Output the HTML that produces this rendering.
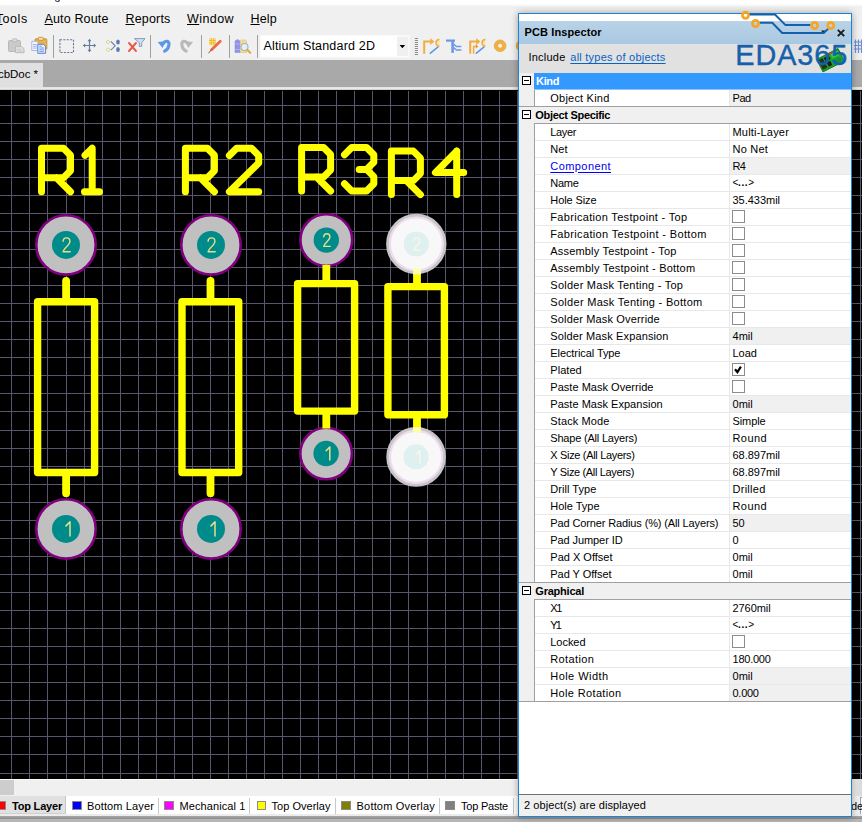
<!DOCTYPE html>
<html><head><meta charset="utf-8"><title>PCB Inspector</title>
<style>
*{box-sizing:border-box;margin:0;padding:0}
html,body{width:862px;height:822px;overflow:hidden;background:#f0f0f0;font-family:"Liberation Sans",sans-serif;}
.abs{position:absolute}
.t{position:absolute;white-space:pre;line-height:1;color:#000}
u{text-decoration:underline;text-underline-offset:1px}
</style></head><body>
<div class="abs" style="left:0;top:0;width:862px;height:822px;overflow:hidden">
<div class="abs" style="left:0;top:0;width:862px;height:6px;background:linear-gradient(#fff 0,#fff 4px,#f6f6f6 6px)"></div>
<div class="abs" style="left:55px;top:-3px;width:5px;height:5px;border:1.3px solid #333;border-top:none;border-radius:0 0 3px 3px"></div>
<div class="t" style="left:-4.3px;top:13.32px;font-size:12.5px;font-weight:400;color:#000;letter-spacing:0.562px;"><u>T</u>ools</div>
<div class="t" style="left:44.5px;top:13.32px;font-size:12.5px;font-weight:400;color:#000;letter-spacing:0.145px;"><u>A</u>uto Route</div>
<div class="t" style="left:125.5px;top:13.32px;font-size:12.5px;font-weight:400;color:#000;letter-spacing:0.174px;"><u>R</u>eports</div>
<div class="t" style="left:187px;top:13.32px;font-size:12.5px;font-weight:400;color:#000;letter-spacing:0.422px;"><u>W</u>indow</div>
<div class="t" style="left:250.5px;top:13.32px;font-size:12.5px;font-weight:400;color:#000;letter-spacing:0.145px;"><u>H</u>elp</div>
<svg class="abs" style="left:0;top:0" width="862" height="62" viewBox="0 0 862 62">
<rect x="53.0" y="35" width="1" height="23" fill="#a0a0a0"/>
<rect x="150.0" y="35" width="1" height="23" fill="#a0a0a0"/>
<rect x="201.0" y="35" width="1" height="23" fill="#a0a0a0"/>
<rect x="229.0" y="35" width="1" height="23" fill="#a0a0a0"/>
<rect x="257.0" y="35" width="1" height="23" fill="#a0a0a0"/>
<g><rect x="8.500" y="40.500" width="12" height="11" rx="1" fill="#cacaca" stroke="#b8b8b8"/><rect x="12.500" y="38.800" width="4.500" height="3" rx=".8" fill="#dcdcdc" stroke="#b4b4b4" stroke-width=".8"/><path d="M15.500 46.500h6l2.500 2.200v4h-8.500z" fill="#dedede" stroke="#bcbcbc"/><path d="M17 49.500h4M17 51.300h5.500" stroke="#c6c6c6" stroke-width=".8"/></g>
<g><rect x="35" y="38.800" width="11.800" height="10.500" rx="1" fill="#e8b24e" stroke="#c99436"/><rect x="38.300" y="37.300" width="5" height="3" rx=".8" fill="#f6e2a4" stroke="#b88a34" stroke-width=".8"/><path d="M31.800 41.300h4.700l1.600 1.600v7.600h-6.300z" fill="#f4f7fe" stroke="#9db3e2" stroke-width=".9"/><path d="M33 44.500h3.800M33 46.300h3.800M33 48.100h3.800" stroke="#86a6e6" stroke-width=".8"/><path d="M37.800 44.300h5.600l2.200 2.200v6.800h-7.800z" fill="#eaf0fd" stroke="#5b82d8" stroke-width="1"/><path d="M39.300 48h4.800M39.300 49.800h4.800M39.300 51.600h4.800" stroke="#5c86dc" stroke-width=".8"/><path d="M39.300 46.200h2.500" stroke="#5c86dc" stroke-width=".8"/></g>
<rect x="59.900" y="39.700" width="13.600" height="12.800" fill="none" stroke="#64789a" stroke-width="1.100" stroke-dasharray="2.100 1.300"/>
<g stroke="#657c9c" stroke-width="1.200" fill="#657c9c"><path d="M84 45.500h11M89.500 40v11" fill="none"/><path d="M82.800 45.500l2.400-2v4zM96.200 45.500l-2.400-2v4zM89.500 38.800l-2 2.400h4zM89.500 52.200l-2-2.400h4z" stroke="none"/></g>
<g><path d="M106 42l2-2 2 2-2 2zM106 49.800l2-2 2 2-2 2z" fill="#fbf7a8" stroke="#c9c59a" stroke-width=".7"/><path d="M110.800 41.300l4.400 4.500-4.400 4.400" fill="none" stroke="#6c7ea6" stroke-width="1.100"/><ellipse cx="118" cy="42" rx="1.800" ry="2.500" fill="#5679ba"/><ellipse cx="118" cy="49.600" rx="1.800" ry="2.500" fill="#5679ba"/></g>
<g><path d="M129 43l7 8M136 43l-7 8" stroke="#e45a48" stroke-width="1.900" stroke-linecap="round"/><path d="M134.500 38.600h10.500l-3.300 4v3.800h-2.400v-3.800z" fill="#d3dfee" stroke="#7b93bb" stroke-width=".9" stroke-linejoin="round"/></g>
<g><path d="M163.200 43.600C165.500 39.800 169.600 40.800 168.900 45.200C168.500 48 166.800 50 164.600 51.200" fill="none" stroke="#5c96e8" stroke-width="3.100" stroke-linecap="round"/><path d="M157.700 42l7.600-.700-2.700 6.600z" fill="#5c96e8"/></g>
<g transform="translate(350.800,0) scale(-1,1)"><path d="M163.200 43.600C165.500 39.800 169.600 40.800 168.900 45.200C168.500 48 166.800 50 164.600 51.200" fill="none" stroke="#b9b9b9" stroke-width="3.100" stroke-linecap="round"/><path d="M157.700 42l7.600-.700-2.700 6.600z" fill="#b9b9b9"/></g>
<g><rect x="209" y="38.200" width="7" height="7" fill="#f6e27a"/><path d="M211.300 38.200v7M213.700 38.200v7M209 40.500h7M209 42.900h7" stroke="#eeb83a" stroke-width=".9"/><path d="M220.300 41.200l-8.800 8.600" stroke="#ee6a42" stroke-width="2.700" stroke-linecap="round"/><path d="M211.600 49.700l-3.200 3.600" stroke="#7a5048" stroke-width="1"/></g>
<g><path d="M235 41l2.500-1.500 2.500 1.500v11.500h-5z" fill="#9393ea" stroke="#8080dc" stroke-width=".5"/><path d="M235 44h5M235 49.500h5" stroke="#b4b4f4" stroke-width=".9"/><path d="M240.200 41l1.500-1.500 1.500 1.200 1.500-1.200 1.800 1.500v11.500h-6.300z" fill="#f2dc92" stroke="#d2b860" stroke-width=".5"/><circle cx="244.500" cy="47" r="3.500" fill="#e6eff9" stroke="#9fb0c8" stroke-width="1.100"/><path d="M247.200 49.800l3 3" stroke="#e0aa44" stroke-width="2.200" stroke-linecap="round"/></g>
<rect x="260.5" y="35.5" width="148.500" height="21.500" fill="#fff" stroke="#fafafa"/>
<rect x="397" y="36.500" width="11.300" height="19.500" fill="#f0f0f0"/>
<path d="M399.600 45l5.600 0-2.800 3.200z" fill="#000"/>
<rect x="414.800" y="38" width="3.200" height="1" fill="#8c8c8c"/>
<rect x="414.800" y="40" width="3.200" height="1" fill="#8c8c8c"/>
<rect x="414.800" y="42" width="3.200" height="1" fill="#8c8c8c"/>
<rect x="414.800" y="44" width="3.200" height="1" fill="#8c8c8c"/>
<rect x="414.800" y="46" width="3.200" height="1" fill="#8c8c8c"/>
<rect x="414.800" y="48" width="3.200" height="1" fill="#8c8c8c"/>
<rect x="414.800" y="50" width="3.200" height="1" fill="#8c8c8c"/>
<rect x="414.800" y="52" width="3.200" height="1" fill="#8c8c8c"/>
<rect x="414.800" y="54" width="3.200" height="1" fill="#8c8c8c"/>
<g transform="translate(423,0)"><path d="M1.200 53.800v-12.200h6.500" fill="none" stroke="#f0ae3c" stroke-width="2"/><path d="M7.200 38.300l4.200 3.300-4.200 3.300z" fill="#f0ae3c"/><path d="M6.800 53.600l8.600-7" stroke="#5a93e8" stroke-width="1.400"/><path d="M16.400 39.400a3.400 3.400 0 0 0 0 6.800" fill="#f8e2a4" stroke="#eeaa3a" stroke-width="1.500"/></g>
<g stroke="#6a98e6" fill="none"><path d="M446 40.600h9" stroke-width="2.200"/><path d="M452.600 40v12.800" stroke-width="2.600"/><path d="M453.500 44l3 2.500h4.800M453.500 47.500l3 2.500h4.800" stroke-width="1.400"/></g>
<g transform="translate(469,0)"><path d="M1.200 53.800v-12.200h6.500" fill="none" stroke="#f0ae3c" stroke-width="2"/><path d="M7.200 38.300l4.200 3.300-4.200 3.300z" fill="#f0ae3c"/><path d="M4.600 53.800v-7.400h3" fill="none" stroke="#f0ae3c" stroke-width="1.500"/><path d="M6.800 44.300l2.600 2.100-2.600 2.100z" fill="#e89a30"/><path d="M6.800 53.600l8.600-7" stroke="#5a93e8" stroke-width="1.400"/><path d="M16.400 39.400a3.400 3.400 0 0 0 0 6.800" fill="#f8e2a4" stroke="#eeaa3a" stroke-width="1.500"/></g>
<circle cx="500.100" cy="45.800" r="3.900" fill="none" stroke="#f0b03c" stroke-width="3.700"/><circle cx="500.100" cy="45.800" r="5.900" fill="none" stroke="#d99a30" stroke-width=".6"/>
<circle cx="521.500" cy="45.800" r="3.900" fill="none" stroke="#f0b03c" stroke-width="3.700"/>
<g stroke="#6f8fd6" stroke-width="1.200"><path d="M855.500 39.500v13.500M858.500 39.500v13.500M861.500 39.500v13.500M854 42h8M854 45.500h8M854 49h8"/></g>
</svg>
<div class="t" style="left:263.5px;top:40.22px;font-size:12.5px;font-weight:400;color:#000;letter-spacing:0.178px;">Altium Standard 2D</div>
<div class="abs" style="left:0;top:60px;width:862px;height:27px;background:#a9a9a9"></div>
<div class="abs" style="left:0;top:63px;width:43px;height:24px;background:#e0e0e0"></div>
<div class="abs" style="left:0;top:87px;width:862px;height:3px;background:linear-gradient(#e2e2e2 0,#ececec 2px,#b8b8b8 3px)"></div>
<div class="t" style="left:-2px;top:68.87px;font-size:11.5px;font-weight:400;color:#000;letter-spacing:-0.04px;">cbDoc *</div>
<div class="abs" style="left:0;top:90px;width:862px;height:689px;background:#000;overflow:hidden">
<svg class="abs" style="left:0;top:-90px" width="862" height="822" viewBox="0 0 862 822">
<g fill="#58566c" shape-rendering="crispEdges">
<rect x="11" y="91" width="1" height="688"/>
<rect x="29" y="91" width="1" height="688"/>
<rect x="47" y="91" width="1" height="688"/>
<rect x="66" y="91" width="1" height="688"/>
<rect x="84" y="91" width="1" height="688"/>
<rect x="102" y="91" width="1" height="688"/>
<rect x="120" y="91" width="1" height="688"/>
<rect x="138" y="91" width="1" height="688"/>
<rect x="156" y="91" width="1" height="688"/>
<rect x="174" y="91" width="1" height="688"/>
<rect x="192" y="91" width="1" height="688"/>
<rect x="210" y="91" width="1" height="688"/>
<rect x="228" y="91" width="1" height="688"/>
<rect x="246" y="91" width="1" height="688"/>
<rect x="264" y="91" width="1" height="688"/>
<rect x="282" y="91" width="1" height="688"/>
<rect x="300" y="91" width="1" height="688"/>
<rect x="318" y="91" width="1" height="688"/>
<rect x="336" y="91" width="1" height="688"/>
<rect x="354" y="91" width="1" height="688"/>
<rect x="372" y="91" width="1" height="688"/>
<rect x="390" y="91" width="1" height="688"/>
<rect x="408" y="91" width="1" height="688"/>
<rect x="427" y="91" width="1" height="688"/>
<rect x="445" y="91" width="1" height="688"/>
<rect x="463" y="91" width="1" height="688"/>
<rect x="481" y="91" width="1" height="688"/>
<rect x="499" y="91" width="1" height="688"/>
<rect x="517" y="91" width="1" height="688"/>
<rect x="535" y="91" width="1" height="688"/>
<rect x="553" y="91" width="1" height="688"/>
<rect x="571" y="91" width="1" height="688"/>
<rect x="589" y="91" width="1" height="688"/>
<rect x="607" y="91" width="1" height="688"/>
<rect x="625" y="91" width="1" height="688"/>
<rect x="643" y="91" width="1" height="688"/>
<rect x="661" y="91" width="1" height="688"/>
<rect x="679" y="91" width="1" height="688"/>
<rect x="697" y="91" width="1" height="688"/>
<rect x="715" y="91" width="1" height="688"/>
<rect x="733" y="91" width="1" height="688"/>
<rect x="751" y="91" width="1" height="688"/>
<rect x="769" y="91" width="1" height="688"/>
<rect x="788" y="91" width="1" height="688"/>
<rect x="806" y="91" width="1" height="688"/>
<rect x="824" y="91" width="1" height="688"/>
<rect x="842" y="91" width="1" height="688"/>
<rect x="860" y="91" width="1" height="688"/>
<rect x="0" y="105" width="862" height="1"/>
<rect x="0" y="123" width="862" height="1"/>
<rect x="0" y="141" width="862" height="1"/>
<rect x="0" y="159" width="862" height="1"/>
<rect x="0" y="177" width="862" height="1"/>
<rect x="0" y="195" width="862" height="1"/>
<rect x="0" y="213" width="862" height="1"/>
<rect x="0" y="231" width="862" height="1"/>
<rect x="0" y="249" width="862" height="1"/>
<rect x="0" y="267" width="862" height="1"/>
<rect x="0" y="285" width="862" height="1"/>
<rect x="0" y="303" width="862" height="1"/>
<rect x="0" y="321" width="862" height="1"/>
<rect x="0" y="339" width="862" height="1"/>
<rect x="0" y="357" width="862" height="1"/>
<rect x="0" y="375" width="862" height="1"/>
<rect x="0" y="393" width="862" height="1"/>
<rect x="0" y="411" width="862" height="1"/>
<rect x="0" y="430" width="862" height="1"/>
<rect x="0" y="448" width="862" height="1"/>
<rect x="0" y="466" width="862" height="1"/>
<rect x="0" y="484" width="862" height="1"/>
<rect x="0" y="502" width="862" height="1"/>
<rect x="0" y="520" width="862" height="1"/>
<rect x="0" y="538" width="862" height="1"/>
<rect x="0" y="556" width="862" height="1"/>
<rect x="0" y="574" width="862" height="1"/>
<rect x="0" y="592" width="862" height="1"/>
<rect x="0" y="610" width="862" height="1"/>
<rect x="0" y="628" width="862" height="1"/>
<rect x="0" y="646" width="862" height="1"/>
<rect x="0" y="664" width="862" height="1"/>
<rect x="0" y="682" width="862" height="1"/>
<rect x="0" y="700" width="862" height="1"/>
<rect x="0" y="718" width="862" height="1"/>
<rect x="0" y="736" width="862" height="1"/>
<rect x="0" y="754" width="862" height="1"/>
<rect x="0" y="773" width="862" height="1"/>
</g>
<g fill="none" stroke="#ffff00" stroke-width="7" stroke-linecap="round" stroke-linejoin="round">
<path d="M41.5 191.8V148.3M41.5 148.3H63.5L70.5 155.3V170.8L63.5 177.8H41.5M56.5 177.8L70.5 191.8"/>
<path d="M85.0 155.3L92.2 148.3V191.8M84.5 191.8H99.5"/>
<path d="M185.4 191.8V148.3M185.4 148.3H207.4L214.4 155.3V170.8L207.4 177.8H185.4M200.4 177.8L214.4 191.8"/>
<path d="M229.4 155.5L236.6 148.3H251.5L258.7 155.5V163.0L229.4 191.8H258.7"/>
<path d="M301.6 191.0V147.5M301.6 147.5H323.6L330.6 154.5V170.0L323.6 177.0H301.6M316.6 177.0L330.6 191.0"/>
<path d="M344.5 154.7L351.7 147.5H366.6L373.8 154.7V162.2L366.6 169.4H359.2M366.6 169.4L373.8 176.6V183.8L366.6 191.0H351.7L344.5 183.8"/>
<path d="M391.4 194.6V151.1M391.4 151.1H413.4L420.4 158.1V173.6L413.4 180.6H391.4M406.4 180.6L420.4 194.6"/>
<path d="M456.7 194.6V151.1M456.7 151.1L435.4 172.6H463.7"/>
</g>
<circle cx="66.0" cy="244.9" r="29.7" fill="#c0c0c0" stroke="#800080" stroke-width="2.600"/><circle cx="66.0" cy="244.9" r="14.0" fill="#008b8b"/><path d="M63.1 241.2C63.4 236.8 69.9 236.8 69.9 241.4C69.9 245.0 63.6 248.3 63.1 251.8H70.2" fill="none" stroke="#e6e08a" stroke-width="1.4" stroke-linecap="round" stroke-linejoin="round"/>
<circle cx="66.0" cy="528.9" r="29.7" fill="#c0c0c0" stroke="#800080" stroke-width="2.600"/><circle cx="66.0" cy="528.9" r="14.0" fill="#008b8b"/><path d="M66.0 525.9L70.0 521.9V535.9" fill="none" stroke="#e6e08a" stroke-width="1.5" stroke-linecap="round" stroke-linejoin="round"/>
<rect x="37.6" y="301.7" width="57.0" height="170.8" fill="none" stroke="#ffff00" stroke-width="7.4" stroke-linejoin="round"/><path d="M66.1 300.9V280.8M66.1 473.3V493.2" fill="none" stroke="#ffff00" stroke-width="7.800" stroke-linecap="round"/>
<circle cx="211.0" cy="244.9" r="29.7" fill="#c0c0c0" stroke="#800080" stroke-width="2.600"/><circle cx="211.0" cy="244.9" r="14.0" fill="#008b8b"/><path d="M208.1 241.2C208.4 236.8 214.9 236.8 214.9 241.4C214.9 245.0 208.6 248.3 208.1 251.8H215.2" fill="none" stroke="#e6e08a" stroke-width="1.4" stroke-linecap="round" stroke-linejoin="round"/>
<circle cx="211.0" cy="528.9" r="29.7" fill="#c0c0c0" stroke="#800080" stroke-width="2.600"/><circle cx="211.0" cy="528.9" r="14.0" fill="#008b8b"/><path d="M211.0 525.9L215.0 521.9V535.9" fill="none" stroke="#e6e08a" stroke-width="1.5" stroke-linecap="round" stroke-linejoin="round"/>
<rect x="182.0" y="301.7" width="56.7" height="170.8" fill="none" stroke="#ffff00" stroke-width="7.4" stroke-linejoin="round"/><path d="M210.5 300.9V280.8M210.5 473.3V493.2" fill="none" stroke="#ffff00" stroke-width="7.800" stroke-linecap="round"/>
<circle cx="326.3" cy="240.1" r="25.9" fill="#c0c0c0" stroke="#800080" stroke-width="2.600"/><circle cx="326.3" cy="240.1" r="12.7" fill="#008b8b"/><path d="M323.7 236.7C324.0 232.8 329.9 232.8 329.9 236.9C329.9 240.2 324.2 243.2 323.7 246.4H330.2" fill="none" stroke="#e6e08a" stroke-width="1.4" stroke-linecap="round" stroke-linejoin="round"/>
<circle cx="326.1" cy="453.5" r="25.8" fill="#c0c0c0" stroke="#800080" stroke-width="2.600"/><circle cx="326.1" cy="453.5" r="12.7" fill="#008b8b"/><path d="M326.1 450.8L329.8 447.1V459.9" fill="none" stroke="#e6e08a" stroke-width="1.5" stroke-linecap="round" stroke-linejoin="round"/>
<rect x="297.6" y="283.6" width="57.0" height="127.5" fill="none" stroke="#ffff00" stroke-width="7.4" stroke-linejoin="round"/><path d="M326.3 282.8V265.0M326.3 411.9V428.5" fill="none" stroke="#ffff00" stroke-width="7.800" stroke-linecap="butt"/>
<rect x="387.9" y="286.6" width="56.5" height="128.1" fill="none" stroke="#ffff00" stroke-width="7.4" stroke-linejoin="round"/><path d="M417.0 285.8V272.0M417.0 415.5V428.5" fill="none" stroke="#ffff00" stroke-width="7.800" stroke-linecap="round"/>
<circle cx="416.3" cy="244.0" r="28.7" fill="#f8f8f8" stroke="#c6c6c6" stroke-width="3"/><circle cx="416.3" cy="244.0" r="26.4" fill="none" stroke="#f0daf0" stroke-width="2"/><circle cx="416.3" cy="244.0" r="12.6" fill="#dff0f0"/><path d="M413.7 240.7C414.0 236.7 419.9 236.7 419.9 240.8C419.9 244.1 414.2 247.1 413.7 250.2H420.1" fill="none" stroke="#f7f7e6" stroke-width="1.4" stroke-linecap="round" stroke-linejoin="round"/>
<circle cx="416.1" cy="456.9" r="28.3" fill="#f8f8f8" stroke="#c6c6c6" stroke-width="3"/><circle cx="416.1" cy="456.9" r="26.0" fill="none" stroke="#f0daf0" stroke-width="2"/><circle cx="416.1" cy="456.9" r="12.6" fill="#dff0f0"/><path d="M416.2 454.2L419.8 450.6V463.2" fill="none" stroke="#f7f7e6" stroke-width="1.5" stroke-linecap="round" stroke-linejoin="round"/>
<rect x="413.100" y="268.500" width="7.800" height="6" fill="#ffffa8"/>
<rect x="413.100" y="427" width="7.800" height="5.500" fill="#ffffa8"/>
</svg></div>
<div class="abs" style="left:0;top:779px;width:862px;height:17px;background:#f0f0f0;border-top:1px solid #fbfbfb"></div>
<div class="abs" style="left:0;top:780px;width:14px;height:15px;background:#cdcdcd"></div>
<div class="abs" style="left:852px;top:779px;width:10px;height:17px;background:linear-gradient(90deg,#f0f0f0,#d8d8d8)"></div>
<div class="abs" style="left:0;top:796px;width:862px;height:18px;background:#fff"></div>
<div class="abs" style="left:0;top:796px;width:65.500px;height:18px;background:#e1e1e1;border-right:1px solid #c4c4c4;border-bottom:1px solid #d0d0d0"></div>
<div class="abs" style="left:157.5px;top:798px;width:1px;height:16px;background:#c8c8c8"></div>
<div class="abs" style="left:249px;top:798px;width:1px;height:16px;background:#c8c8c8"></div>
<div class="abs" style="left:335px;top:798px;width:1px;height:16px;background:#c8c8c8"></div>
<div class="abs" style="left:438.8px;top:798px;width:1px;height:16px;background:#c8c8c8"></div>
<div class="abs" style="left:512.5px;top:798px;width:1px;height:16px;background:#c8c8c8"></div>
<div class="abs" style="left:-4px;top:800.700px;width:9.5px;height:9px;background:#ff0000;border:1px solid #8a8a8a"></div>
<div class="abs" style="left:72.2px;top:800.700px;width:9.6px;height:9px;background:#0000ff;border:1px solid #8a8a8a"></div>
<div class="abs" style="left:164.3px;top:800.700px;width:9.3px;height:9px;background:#ff00ff;border:1px solid #8a8a8a"></div>
<div class="abs" style="left:256.5px;top:800.700px;width:9.3px;height:9px;background:#ffff00;border:1px solid #8a8a8a"></div>
<div class="abs" style="left:341px;top:800.700px;width:9.6px;height:9px;background:#808000;border:1px solid #8a8a8a"></div>
<div class="abs" style="left:445px;top:800.700px;width:9.6px;height:9px;background:#808080;border:1px solid #8a8a8a"></div>
<div class="t" style="left:12px;top:800.69px;font-size:11px;font-weight:700;color:#000;letter-spacing:-0.196px;">Top Layer</div>
<div class="t" style="left:87px;top:800.69px;font-size:11px;font-weight:400;color:#000;letter-spacing:0.132px;">Bottom Layer</div>
<div class="t" style="left:179.6px;top:800.69px;font-size:11px;font-weight:400;color:#000;letter-spacing:0.081px;">Mechanical 1</div>
<div class="t" style="left:271.5px;top:800.69px;font-size:11px;font-weight:400;color:#000;letter-spacing:0.027px;">Top Overlay</div>
<div class="t" style="left:356.6px;top:800.69px;font-size:11px;font-weight:400;color:#000;letter-spacing:0.178px;">Bottom Overlay</div>
<div class="t" style="left:461px;top:800.69px;font-size:11px;font-weight:400;color:#000;letter-spacing:-0.214px;">Top Paste</div>
<div class="abs" style="left:852px;top:796px;width:10px;height:18px;background:#f0f0f0"></div>
<div class="abs" style="left:860px;top:797px;width:2px;height:17px;border-left:1px solid #a0a0a0;border-top:1px solid #a0a0a0;background:#fff"></div>
<div class="t" style="left:851px;top:800.69px;font-size:11px;font-weight:400;color:#000;">de</div>
<div class="abs" style="left:0;top:814px;width:862px;height:2px;background:#ececec"></div>
<div class="abs" style="left:0;top:816px;width:862px;height:3px;background:linear-gradient(#a8a8a8,#8c8c8c)"></div>
<div class="abs" style="left:0;top:819px;width:862px;height:3px;background:#b6b6b6"></div>
<div id="panel" class="abs" style="left:518px;top:13px;width:334px;height:804px;background:#fff;border:1px solid #1a84d8;box-shadow:0 0 7px rgba(0,0,0,.35)">
<div class="abs" style="left:0px;top:7px;width:332px;height:23px;background:linear-gradient(#b9d3e8,#a9c8e1)"></div>
<div class="abs" style="left:0px;top:30px;width:332px;height:29px;background:#e1e1e1"></div>
<div class="t" style="left:5.6px;top:12.69px;font-size:11px;font-weight:700;color:#000;letter-spacing:0.093px;">PCB Inspector</div>
<div class="t" style="left:9.5px;top:38.49px;font-size:11px;font-weight:400;color:#000;letter-spacing:0.217px;">Include</div>
<div class="t" style="left:51.3px;top:38.49px;font-size:11px;font-weight:400;color:#0a62c4;letter-spacing:0.24px;text-decoration:underline;text-underline-offset:1.5px">all types of objects</div>
<svg class="abs" style="left:301px;top:14px" width="30" height="12" viewBox="0 0 30 12"><path d="M1 2.500h4.600l-2.300 2.800z" fill="#222"/><path d="M17.800 1.800l6.400 6.400M24.200 1.800l-6.400 6.400" stroke="#1a1a1a" stroke-width="1.900"/></svg>
<div class="abs" style="left:0px;top:59px;width:15px;height:629px;background:#f0f0f0"></div>
<div class="abs" style="left:15px;top:59px;width:317px;height:16px;background:#3399ff"></div>
<div class="abs" style="left:15px;top:75px;width:317px;height:1px;background:#8fc4f6"></div>
<div class="abs" style="left:3px;top:62px;width:9px;height:9px;background:#fff;border:1px solid #000"></div>
<div class="abs" style="left:5px;top:66px;width:5px;height:1px;background:#000"></div>
<div class="t" style="left:17px;top:61.69px;font-size:11px;font-weight:700;color:#fff;letter-spacing:-0.313px;">Kind</div>
<div class="abs" style="left:15px;top:76px;width:1px;height:17px;background:#a0a0a0"></div>
<div class="abs" style="left:211px;top:76px;width:121px;height:16px;background:#f0f0f0"></div>
<div class="abs" style="left:210px;top:76px;width:1px;height:16px;background:#e8e8e8"></div>
<div class="abs" style="left:0px;top:92px;width:332px;height:1px;background:#a0a0a0"></div>
<div class="t" style="left:31.3px;top:78.69px;font-size:11px;font-weight:400;color:#000;letter-spacing:0.211px;">Object Kind</div>
<div class="t" style="left:213.5px;top:78.69px;font-size:11px;font-weight:400;color:#000;letter-spacing:-0.459px;">Pad</div>
<div class="abs" style="left:0px;top:93px;width:332px;height:16px;background:#f0f0f0"></div>
<div class="abs" style="left:15px;top:109px;width:317px;height:1px;background:#a0a0a0"></div>
<div class="abs" style="left:3px;top:96px;width:9px;height:9px;background:#fff;border:1px solid #000"></div>
<div class="abs" style="left:5px;top:100px;width:5px;height:1px;background:#000"></div>
<div class="t" style="left:16.3px;top:95.69px;font-size:11px;font-weight:700;color:#000;letter-spacing:-0.306px;">Object Specific</div>
<div class="abs" style="left:15px;top:110px;width:1px;height:17px;background:#a0a0a0"></div>
<div class="abs" style="left:210px;top:110px;width:1px;height:16px;background:#e8e8e8"></div>
<div class="abs" style="left:16px;top:126px;width:316px;height:1px;background:#e8e8e8"></div>
<div class="t" style="left:31.3px;top:112.69px;font-size:11px;font-weight:400;color:#000;letter-spacing:-0.346px;">Layer</div>
<div class="t" style="left:213.5px;top:112.69px;font-size:11px;font-weight:400;color:#000;letter-spacing:0.19px;">Multi-Layer</div>
<div class="abs" style="left:15px;top:127px;width:1px;height:17px;background:#a0a0a0"></div>
<div class="abs" style="left:210px;top:127px;width:1px;height:16px;background:#e8e8e8"></div>
<div class="abs" style="left:16px;top:143px;width:316px;height:1px;background:#e8e8e8"></div>
<div class="t" style="left:31.3px;top:129.69px;font-size:11px;font-weight:400;color:#000;letter-spacing:0.092px;">Net</div>
<div class="t" style="left:213.5px;top:129.69px;font-size:11px;font-weight:400;color:#000;letter-spacing:0.225px;">No Net</div>
<div class="abs" style="left:15px;top:144px;width:1px;height:17px;background:#a0a0a0"></div>
<div class="abs" style="left:211px;top:144px;width:121px;height:16px;background:#f0f0f0"></div>
<div class="abs" style="left:210px;top:144px;width:1px;height:16px;background:#e8e8e8"></div>
<div class="abs" style="left:16px;top:160px;width:316px;height:1px;background:#e8e8e8"></div>
<div class="t" style="left:31.3px;top:146.69px;font-size:11px;font-weight:400;color:#0000ee;letter-spacing:0.425px;text-decoration:underline;text-underline-offset:1.5px">Component</div>
<div class="t" style="left:213.5px;top:146.69px;font-size:11px;font-weight:400;color:#000;letter-spacing:-0.731px;">R4</div>
<div class="abs" style="left:15px;top:161px;width:1px;height:17px;background:#a0a0a0"></div>
<div class="abs" style="left:210px;top:161px;width:1px;height:16px;background:#e8e8e8"></div>
<div class="abs" style="left:16px;top:177px;width:316px;height:1px;background:#e8e8e8"></div>
<div class="t" style="left:31.3px;top:163.69px;font-size:11px;font-weight:400;color:#000;letter-spacing:-0.261px;">Name</div>
<div class="t" style="left:213.5px;top:163.69px;font-size:11px;font-weight:400;color:#000;font-size:10px;letter-spacing:-.3px">&lt;<b style="letter-spacing:.6px">...</b>&gt;</div>
<div class="abs" style="left:15px;top:178px;width:1px;height:17px;background:#a0a0a0"></div>
<div class="abs" style="left:210px;top:178px;width:1px;height:16px;background:#e8e8e8"></div>
<div class="abs" style="left:16px;top:194px;width:316px;height:1px;background:#e8e8e8"></div>
<div class="t" style="left:31.3px;top:180.69px;font-size:11px;font-weight:400;color:#000;letter-spacing:-0.109px;">Hole Size</div>
<div class="t" style="left:213.5px;top:180.69px;font-size:11px;font-weight:400;color:#000;letter-spacing:-0.023px;">35.433mil</div>
<div class="abs" style="left:15px;top:195px;width:1px;height:17px;background:#a0a0a0"></div>
<div class="abs" style="left:210px;top:195px;width:1px;height:16px;background:#e8e8e8"></div>
<div class="abs" style="left:16px;top:211px;width:316px;height:1px;background:#e8e8e8"></div>
<div class="t" style="left:31.3px;top:197.69px;font-size:11px;font-weight:400;color:#000;letter-spacing:0.314px;">Fabrication Testpoint - Top</div>
<div class="abs" style="left:213.20000000000005px;top:196.2px;width:12.6px;height:12.5px;background:#fff;border:1px solid #8c8c8c"></div>
<div class="abs" style="left:15px;top:212px;width:1px;height:17px;background:#a0a0a0"></div>
<div class="abs" style="left:210px;top:212px;width:1px;height:16px;background:#e8e8e8"></div>
<div class="abs" style="left:16px;top:228px;width:316px;height:1px;background:#e8e8e8"></div>
<div class="t" style="left:31.3px;top:214.69px;font-size:11px;font-weight:400;color:#000;letter-spacing:0.349px;">Fabrication Testpoint - Bottom</div>
<div class="abs" style="left:213.20000000000005px;top:213.2px;width:12.6px;height:12.5px;background:#fff;border:1px solid #8c8c8c"></div>
<div class="abs" style="left:15px;top:229px;width:1px;height:17px;background:#a0a0a0"></div>
<div class="abs" style="left:210px;top:229px;width:1px;height:16px;background:#e8e8e8"></div>
<div class="abs" style="left:16px;top:245px;width:316px;height:1px;background:#e8e8e8"></div>
<div class="t" style="left:31.3px;top:231.69px;font-size:11px;font-weight:400;color:#000;letter-spacing:0.18px;">Assembly Testpoint - Top</div>
<div class="abs" style="left:213.20000000000005px;top:230.2px;width:12.6px;height:12.5px;background:#fff;border:1px solid #8c8c8c"></div>
<div class="abs" style="left:15px;top:246px;width:1px;height:17px;background:#a0a0a0"></div>
<div class="abs" style="left:210px;top:246px;width:1px;height:16px;background:#e8e8e8"></div>
<div class="abs" style="left:16px;top:262px;width:316px;height:1px;background:#e8e8e8"></div>
<div class="t" style="left:31.3px;top:248.69px;font-size:11px;font-weight:400;color:#000;letter-spacing:0.215px;">Assembly Testpoint - Bottom</div>
<div class="abs" style="left:213.20000000000005px;top:247.2px;width:12.6px;height:12.5px;background:#fff;border:1px solid #8c8c8c"></div>
<div class="abs" style="left:15px;top:263px;width:1px;height:17px;background:#a0a0a0"></div>
<div class="abs" style="left:210px;top:263px;width:1px;height:16px;background:#e8e8e8"></div>
<div class="abs" style="left:16px;top:279px;width:316px;height:1px;background:#e8e8e8"></div>
<div class="t" style="left:31.3px;top:265.69px;font-size:11px;font-weight:400;color:#000;letter-spacing:0.245px;">Solder Mask Tenting - Top</div>
<div class="abs" style="left:213.20000000000005px;top:264.2px;width:12.6px;height:12.5px;background:#fff;border:1px solid #8c8c8c"></div>
<div class="abs" style="left:15px;top:280px;width:1px;height:17px;background:#a0a0a0"></div>
<div class="abs" style="left:210px;top:280px;width:1px;height:16px;background:#e8e8e8"></div>
<div class="abs" style="left:16px;top:296px;width:316px;height:1px;background:#e8e8e8"></div>
<div class="t" style="left:31.3px;top:282.69px;font-size:11px;font-weight:400;color:#000;letter-spacing:0.29px;">Solder Mask Tenting - Bottom</div>
<div class="abs" style="left:213.20000000000005px;top:281.2px;width:12.6px;height:12.5px;background:#fff;border:1px solid #8c8c8c"></div>
<div class="abs" style="left:15px;top:297px;width:1px;height:17px;background:#a0a0a0"></div>
<div class="abs" style="left:210px;top:297px;width:1px;height:16px;background:#e8e8e8"></div>
<div class="abs" style="left:16px;top:313px;width:316px;height:1px;background:#e8e8e8"></div>
<div class="t" style="left:31.3px;top:299.69px;font-size:11px;font-weight:400;color:#000;letter-spacing:0.156px;">Solder Mask Override</div>
<div class="abs" style="left:213.20000000000005px;top:298.2px;width:12.6px;height:12.5px;background:#fff;border:1px solid #8c8c8c"></div>
<div class="abs" style="left:15px;top:314px;width:1px;height:17px;background:#a0a0a0"></div>
<div class="abs" style="left:211px;top:314px;width:121px;height:16px;background:#f0f0f0"></div>
<div class="abs" style="left:210px;top:314px;width:1px;height:16px;background:#e8e8e8"></div>
<div class="abs" style="left:16px;top:330px;width:316px;height:1px;background:#e8e8e8"></div>
<div class="t" style="left:31.3px;top:316.69px;font-size:11px;font-weight:400;color:#000;letter-spacing:0.13px;">Solder Mask Expansion</div>
<div class="t" style="left:213.5px;top:316.69px;font-size:11px;font-weight:400;color:#000;letter-spacing:0.032px;">4mil</div>
<div class="abs" style="left:15px;top:331px;width:1px;height:17px;background:#a0a0a0"></div>
<div class="abs" style="left:210px;top:331px;width:1px;height:16px;background:#e8e8e8"></div>
<div class="abs" style="left:16px;top:347px;width:316px;height:1px;background:#e8e8e8"></div>
<div class="t" style="left:31.3px;top:333.69px;font-size:11px;font-weight:400;color:#000;letter-spacing:-0.082px;">Electrical Type</div>
<div class="t" style="left:213.5px;top:333.69px;font-size:11px;font-weight:400;color:#000;letter-spacing:0.004px;">Load</div>
<div class="abs" style="left:15px;top:348px;width:1px;height:17px;background:#a0a0a0"></div>
<div class="abs" style="left:210px;top:348px;width:1px;height:16px;background:#e8e8e8"></div>
<div class="abs" style="left:16px;top:364px;width:316px;height:1px;background:#e8e8e8"></div>
<div class="t" style="left:31.3px;top:350.69px;font-size:11px;font-weight:400;color:#000;letter-spacing:0.033px;">Plated</div>
<div class="abs" style="left:213.20000000000005px;top:349.2px;width:12.6px;height:12.5px;background:#fff;border:1px solid #8c8c8c"></div>
<svg class="abs" style="left:213.60000000000002px;top:349.6px" width="12" height="12" viewBox="0 0 12 12"><path d="M2 5.200l2.400 3 3.500-5.600" fill="none" stroke="#000" stroke-width="2.200"/></svg>
<div class="abs" style="left:15px;top:365px;width:1px;height:17px;background:#a0a0a0"></div>
<div class="abs" style="left:210px;top:365px;width:1px;height:16px;background:#e8e8e8"></div>
<div class="abs" style="left:16px;top:381px;width:316px;height:1px;background:#e8e8e8"></div>
<div class="t" style="left:31.3px;top:367.69px;font-size:11px;font-weight:400;color:#000;letter-spacing:0.026px;">Paste Mask Override</div>
<div class="abs" style="left:213.20000000000005px;top:366.2px;width:12.6px;height:12.5px;background:#fff;border:1px solid #8c8c8c"></div>
<div class="abs" style="left:15px;top:382px;width:1px;height:17px;background:#a0a0a0"></div>
<div class="abs" style="left:211px;top:382px;width:121px;height:16px;background:#f0f0f0"></div>
<div class="abs" style="left:210px;top:382px;width:1px;height:16px;background:#e8e8e8"></div>
<div class="abs" style="left:16px;top:398px;width:316px;height:1px;background:#e8e8e8"></div>
<div class="t" style="left:31.3px;top:384.69px;font-size:11px;font-weight:400;color:#000;letter-spacing:0.025px;">Paste Mask Expansion</div>
<div class="t" style="left:213.5px;top:384.69px;font-size:11px;font-weight:400;color:#000;letter-spacing:0.032px;">0mil</div>
<div class="abs" style="left:15px;top:399px;width:1px;height:17px;background:#a0a0a0"></div>
<div class="abs" style="left:210px;top:399px;width:1px;height:16px;background:#e8e8e8"></div>
<div class="abs" style="left:16px;top:415px;width:316px;height:1px;background:#e8e8e8"></div>
<div class="t" style="left:31.3px;top:401.69px;font-size:11px;font-weight:400;color:#000;letter-spacing:0.111px;">Stack Mode</div>
<div class="t" style="left:213.5px;top:401.69px;font-size:11px;font-weight:400;color:#000;letter-spacing:-0.087px;">Simple</div>
<div class="abs" style="left:15px;top:416px;width:1px;height:17px;background:#a0a0a0"></div>
<div class="abs" style="left:210px;top:416px;width:1px;height:16px;background:#e8e8e8"></div>
<div class="abs" style="left:16px;top:432px;width:316px;height:1px;background:#e8e8e8"></div>
<div class="t" style="left:31.3px;top:418.69px;font-size:11px;font-weight:400;color:#000;letter-spacing:-0.2px;">Shape (All Layers)</div>
<div class="t" style="left:213.5px;top:418.69px;font-size:11px;font-weight:400;color:#000;letter-spacing:0.416px;">Round</div>
<div class="abs" style="left:15px;top:433px;width:1px;height:17px;background:#a0a0a0"></div>
<div class="abs" style="left:210px;top:433px;width:1px;height:16px;background:#e8e8e8"></div>
<div class="abs" style="left:16px;top:449px;width:316px;height:1px;background:#e8e8e8"></div>
<div class="t" style="left:31.3px;top:435.69px;font-size:11px;font-weight:400;color:#000;letter-spacing:-0.325px;">X Size (All Layers)</div>
<div class="t" style="left:213.5px;top:435.69px;font-size:11px;font-weight:400;color:#000;letter-spacing:-0.023px;">68.897mil</div>
<div class="abs" style="left:15px;top:450px;width:1px;height:17px;background:#a0a0a0"></div>
<div class="abs" style="left:210px;top:450px;width:1px;height:16px;background:#e8e8e8"></div>
<div class="abs" style="left:16px;top:466px;width:316px;height:1px;background:#e8e8e8"></div>
<div class="t" style="left:31.3px;top:452.69px;font-size:11px;font-weight:400;color:#000;letter-spacing:-0.346px;">Y Size (All Layers)</div>
<div class="t" style="left:213.5px;top:452.69px;font-size:11px;font-weight:400;color:#000;letter-spacing:-0.023px;">68.897mil</div>
<div class="abs" style="left:15px;top:467px;width:1px;height:17px;background:#a0a0a0"></div>
<div class="abs" style="left:210px;top:467px;width:1px;height:16px;background:#e8e8e8"></div>
<div class="abs" style="left:16px;top:483px;width:316px;height:1px;background:#e8e8e8"></div>
<div class="t" style="left:31.3px;top:469.69px;font-size:11px;font-weight:400;color:#000;letter-spacing:0.034px;">Drill Type</div>
<div class="t" style="left:213.5px;top:469.69px;font-size:11px;font-weight:400;color:#000;letter-spacing:0.273px;">Drilled</div>
<div class="abs" style="left:15px;top:484px;width:1px;height:17px;background:#a0a0a0"></div>
<div class="abs" style="left:210px;top:484px;width:1px;height:16px;background:#e8e8e8"></div>
<div class="abs" style="left:16px;top:500px;width:316px;height:1px;background:#e8e8e8"></div>
<div class="t" style="left:31.3px;top:486.69px;font-size:11px;font-weight:400;color:#000;letter-spacing:-0.014px;">Hole Type</div>
<div class="t" style="left:213.5px;top:486.69px;font-size:11px;font-weight:400;color:#000;letter-spacing:0.416px;">Round</div>
<div class="abs" style="left:15px;top:501px;width:1px;height:17px;background:#a0a0a0"></div>
<div class="abs" style="left:211px;top:501px;width:121px;height:16px;background:#f0f0f0"></div>
<div class="abs" style="left:210px;top:501px;width:1px;height:16px;background:#e8e8e8"></div>
<div class="abs" style="left:16px;top:517px;width:316px;height:1px;background:#e8e8e8"></div>
<div class="t" style="left:31.3px;top:503.69px;font-size:11px;font-weight:400;color:#000;letter-spacing:-0.126px;">Pad Corner Radius (%) (All Layers)</div>
<div class="t" style="left:213.5px;top:503.69px;font-size:11px;font-weight:400;color:#000;letter-spacing:-0.175px;">50</div>
<div class="abs" style="left:15px;top:518px;width:1px;height:17px;background:#a0a0a0"></div>
<div class="abs" style="left:210px;top:518px;width:1px;height:16px;background:#e8e8e8"></div>
<div class="abs" style="left:16px;top:534px;width:316px;height:1px;background:#e8e8e8"></div>
<div class="t" style="left:31.3px;top:520.69px;font-size:11px;font-weight:400;color:#000;letter-spacing:-0.09px;">Pad Jumper ID</div>
<div class="t" style="left:213.5px;top:520.69px;font-size:11px;font-weight:400;color:#000;letter-spacing:-0.525px;">0</div>
<div class="abs" style="left:15px;top:535px;width:1px;height:17px;background:#a0a0a0"></div>
<div class="abs" style="left:210px;top:535px;width:1px;height:16px;background:#e8e8e8"></div>
<div class="abs" style="left:16px;top:551px;width:316px;height:1px;background:#e8e8e8"></div>
<div class="t" style="left:31.3px;top:537.69px;font-size:11px;font-weight:400;color:#000;letter-spacing:0.002px;">Pad X Offset</div>
<div class="t" style="left:213.5px;top:537.69px;font-size:11px;font-weight:400;color:#000;letter-spacing:0.032px;">0mil</div>
<div class="abs" style="left:15px;top:552px;width:1px;height:17px;background:#a0a0a0"></div>
<div class="abs" style="left:210px;top:552px;width:1px;height:16px;background:#e8e8e8"></div>
<div class="abs" style="left:0px;top:568px;width:332px;height:1px;background:#a0a0a0"></div>
<div class="t" style="left:31.3px;top:554.69px;font-size:11px;font-weight:400;color:#000;letter-spacing:-0.04px;">Pad Y Offset</div>
<div class="t" style="left:213.5px;top:554.69px;font-size:11px;font-weight:400;color:#000;letter-spacing:0.032px;">0mil</div>
<div class="abs" style="left:0px;top:569px;width:332px;height:16px;background:#f0f0f0"></div>
<div class="abs" style="left:15px;top:585px;width:317px;height:1px;background:#a0a0a0"></div>
<div class="abs" style="left:3px;top:572px;width:9px;height:9px;background:#fff;border:1px solid #000"></div>
<div class="abs" style="left:5px;top:576px;width:5px;height:1px;background:#000"></div>
<div class="t" style="left:16.3px;top:571.69px;font-size:11px;font-weight:700;color:#000;letter-spacing:-0.228px;">Graphical</div>
<div class="abs" style="left:15px;top:586px;width:1px;height:17px;background:#a0a0a0"></div>
<div class="abs" style="left:210px;top:586px;width:1px;height:16px;background:#e8e8e8"></div>
<div class="abs" style="left:16px;top:602px;width:316px;height:1px;background:#e8e8e8"></div>
<div class="t" style="left:31.3px;top:588.69px;font-size:11px;font-weight:400;color:#000;letter-spacing:-1.484px;">X1</div>
<div class="t" style="left:213.5px;top:588.69px;font-size:11px;font-weight:400;color:#000;letter-spacing:-0.062px;">2760mil</div>
<div class="abs" style="left:15px;top:603px;width:1px;height:17px;background:#a0a0a0"></div>
<div class="abs" style="left:210px;top:603px;width:1px;height:16px;background:#e8e8e8"></div>
<div class="abs" style="left:16px;top:619px;width:316px;height:1px;background:#e8e8e8"></div>
<div class="t" style="left:31.3px;top:605.69px;font-size:11px;font-weight:400;color:#000;letter-spacing:-1.834px;">Y1</div>
<div class="t" style="left:213.5px;top:605.69px;font-size:11px;font-weight:400;color:#000;font-size:10px;letter-spacing:-.3px">&lt;<b style="letter-spacing:.6px">...</b>&gt;</div>
<div class="abs" style="left:15px;top:620px;width:1px;height:17px;background:#a0a0a0"></div>
<div class="abs" style="left:210px;top:620px;width:1px;height:16px;background:#e8e8e8"></div>
<div class="abs" style="left:16px;top:636px;width:316px;height:1px;background:#e8e8e8"></div>
<div class="t" style="left:31.3px;top:622.69px;font-size:11px;font-weight:400;color:#000;letter-spacing:-0.047px;">Locked</div>
<div class="abs" style="left:213.20000000000005px;top:621.2px;width:12.6px;height:12.5px;background:#fff;border:1px solid #8c8c8c"></div>
<div class="abs" style="left:15px;top:637px;width:1px;height:17px;background:#a0a0a0"></div>
<div class="abs" style="left:210px;top:637px;width:1px;height:16px;background:#e8e8e8"></div>
<div class="abs" style="left:16px;top:653px;width:316px;height:1px;background:#e8e8e8"></div>
<div class="t" style="left:31.3px;top:639.69px;font-size:11px;font-weight:400;color:#000;letter-spacing:0.377px;">Rotation</div>
<div class="t" style="left:213.5px;top:639.69px;font-size:11px;font-weight:400;color:#000;letter-spacing:-0.238px;">180.000</div>
<div class="abs" style="left:15px;top:654px;width:1px;height:17px;background:#a0a0a0"></div>
<div class="abs" style="left:211px;top:654px;width:121px;height:16px;background:#f0f0f0"></div>
<div class="abs" style="left:210px;top:654px;width:1px;height:16px;background:#e8e8e8"></div>
<div class="abs" style="left:16px;top:670px;width:316px;height:1px;background:#e8e8e8"></div>
<div class="t" style="left:31.3px;top:656.69px;font-size:11px;font-weight:400;color:#000;letter-spacing:0.44px;">Hole Width</div>
<div class="t" style="left:213.5px;top:656.69px;font-size:11px;font-weight:400;color:#000;letter-spacing:0.032px;">0mil</div>
<div class="abs" style="left:15px;top:671px;width:1px;height:17px;background:#a0a0a0"></div>
<div class="abs" style="left:211px;top:671px;width:121px;height:16px;background:#f0f0f0"></div>
<div class="abs" style="left:210px;top:671px;width:1px;height:16px;background:#e8e8e8"></div>
<div class="abs" style="left:0px;top:687px;width:332px;height:1px;background:#a0a0a0"></div>
<div class="t" style="left:31.3px;top:673.69px;font-size:11px;font-weight:400;color:#000;letter-spacing:0.35px;">Hole Rotation</div>
<div class="t" style="left:213.5px;top:673.69px;font-size:11px;font-weight:400;color:#000;letter-spacing:-0.266px;">0.000</div>
<div class="abs" style="left:0px;top:780px;width:332px;height:1px;background:#707070"></div>
<div class="abs" style="left:0px;top:781px;width:332px;height:21px;background:#f0f0f0"></div>
<div class="t" style="left:5px;top:786.29px;font-size:11px;font-weight:400;color:#000;letter-spacing:0.086px;">2 object(s) are displayed</div>
<svg class="abs" style="left:211px;top:-6px" width="130" height="70" viewBox="730 8 130 70">
<g fill="none" stroke="#1560ac" stroke-width="2" stroke-linejoin="round">
<path d="M749 14.500H775L785.300 24.900H810.500"/>
<path d="M759.500 22.800H772.300L782.200 33H823.800L828.300 28.600"/>
</g>
<circle cx="745.5" cy="15.3" r="3.100" fill="none" stroke="#f5a623" stroke-width="2.700"/>
<circle cx="755.5" cy="23.5" r="3.100" fill="none" stroke="#f5a623" stroke-width="2.700"/>
<circle cx="814.6" cy="25.5" r="3.100" fill="none" stroke="#f5a623" stroke-width="2.700"/>
<circle cx="830.7" cy="25.5" r="3.100" fill="none" stroke="#f5a623" stroke-width="2.700"/>
<g transform="translate(830.5,60.2) rotate(-27)"><rect x="-12" y="-7" width="24" height="14" fill="#17a52a" stroke="#0b6f17" stroke-width=".8"/><rect x="-11" y="-5.500" width="5" height="10.500" fill="#2a2f22"/><rect x="-5" y="-5" width="5.500" height="4" fill="#141414"/><rect x="-4.500" y="0.500" width="4" height="4.500" fill="#1d1d1d"/><rect x="2.500" y="-5.500" width="8" height="5" fill="#35c845"/><rect x="3" y="1.500" width="7" height="4" fill="#11952a"/><rect x="1" y="-6.800" width="4" height="1.600" fill="#c84030"/></g>
<text x="735.300" y="65.200" font-family="Liberation Sans, sans-serif" font-size="28.800" fill="#1560ac" stroke="#1560ac" stroke-width=".400" textLength="112" lengthAdjust="spacing">EDA365</text>
</svg>
</div>
</div></body></html>
